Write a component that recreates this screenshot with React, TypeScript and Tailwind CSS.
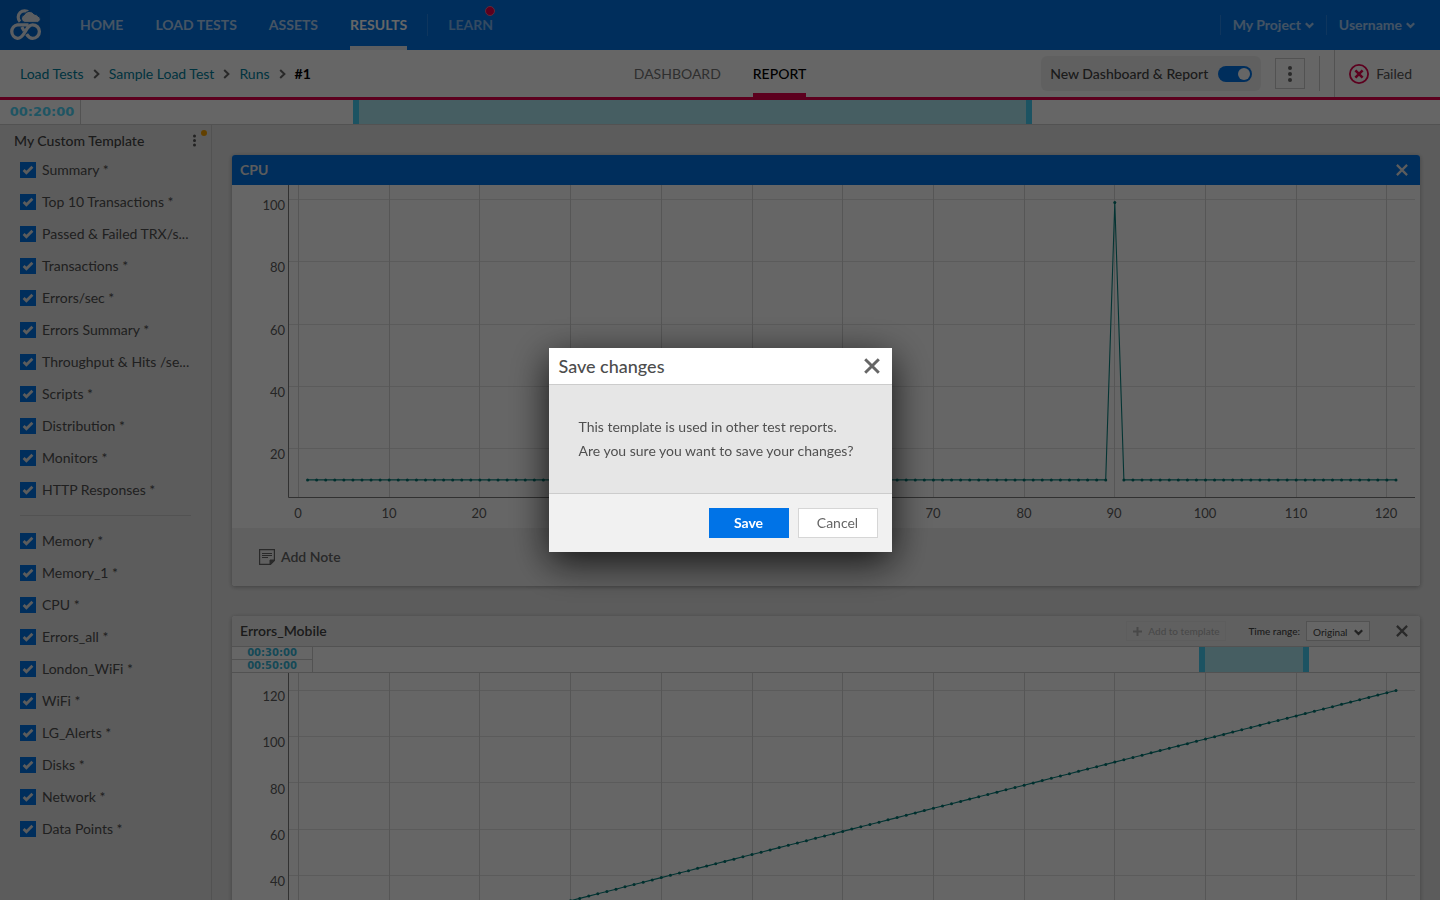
import { useId } from "react";
import type { ReactNode } from "react";

const TEMPLATE_ITEMS = [
  "Summary *",
  "Top 10 Transactions *",
  "Passed & Failed TRX/s...",
  "Transactions *",
  "Errors/sec *",
  "Errors Summary *",
  "Throughput & Hits /se...",
  "Scripts *",
  "Distribution *",
  "Monitors *",
  "HTTP Responses *",
];

const MONITOR_ITEMS = [
  "Memory *",
  "Memory_1 *",
  "CPU *",
  "Errors_all *",
  "London_WiFi *",
  "WiFi *",
  "LG_Alerts *",
  "Disks *",
  "Network *",
  "Data Points *",
];

const SAMPLES = Array.from({ length: 121 }, (_, i) => i + 1);

function LogoIcon() {
  return (
    <svg viewBox="0 0 50 50" className="size-[50px]" fill="none" aria-hidden="true">
      <path
        d="M28.5 24.8 H17.5 A6.9 6.9 0 0 0 17.5 38.4 C21.5 38.4 23.2 35 25.2 31.6 C27.2 28 29 24.8 32.6 24.8 A6.8 6.8 0 0 1 32.6 38.4 C29.6 38.4 27.9 36.4 26.6 34.2"
        stroke="#e6ebf2"
        strokeWidth="3.3"
      />
      <path d="M21.8 27 L24.2 31" stroke="#e6ebf2" strokeWidth="3.3" />
      <path d="M29 12.8 A6.2 6.2 0 1 0 20 21.6" stroke="#e6ebf2" strokeWidth="3.2" />
      <path
        d="M24.8 22.4 a3.9 3.9 0 0 1 -0.6 -7.6 a5.6 5.6 0 0 1 10 -0.7 a4 4 0 0 1 3.6 2 a3.2 3.2 0 0 1 -0.2 6.3 z"
        fill="#e6ebf2"
        stroke="#0067cf"
        strokeWidth="1"
      />
    </svg>
  );
}

function CloseIcon({ className }: { className: string }) {
  return (
    <svg viewBox="0 0 12 12" className={className} fill="none" stroke="currentColor" strokeWidth="2.2" aria-hidden="true">
      <path d="M0.9 0.9 L11.1 11.1 M11.1 0.9 L0.9 11.1" />
    </svg>
  );
}

function ChevronDown() {
  return (
    <svg viewBox="0 0 9 7" className="h-[7px] w-[9px]" fill="none" stroke="currentColor" strokeWidth="2.2" aria-hidden="true">
      <path d="M0.8 1.2 L4.5 4.9 L8.2 1.2" />
    </svg>
  );
}

function ChevronRight() {
  return (
    <svg viewBox="0 0 7 10" className="mx-[9px] h-[10px] w-[7px] text-[#666]" fill="none" stroke="currentColor" strokeWidth="2" aria-hidden="true">
      <path d="M1.2 1 L5.4 5 L1.2 9" />
    </svg>
  );
}

function Kebab({ className }: { className: string }) {
  return (
    <svg viewBox="0 0 4 16" className={className} fill="currentColor" aria-hidden="true">
      <circle cx="2" cy="2" r="2" />
      <circle cx="2" cy="8" r="2" />
      <circle cx="2" cy="14" r="2" />
    </svg>
  );
}

function NavLink({ children, active = false }: { children: ReactNode; active?: boolean }) {
  return (
    <a
      href="#"
      className={
        active
          ? "flex items-center border-b-4 border-[#e6ebf2] pt-1 text-white"
          : "flex items-center text-white/70"
      }
    >
      {children}
    </a>
  );
}

function TopBar() {
  return (
    <header className="flex h-[50px] shrink-0 bg-[#0073e7] font-bold">
      <a href="#" aria-label="Home" className="bg-[#0067cf]">
        <LogoIcon />
      </a>
      <nav className="ml-[30px] flex gap-8">
        <NavLink>HOME</NavLink>
        <NavLink>LOAD TESTS</NavLink>
        <NavLink>ASSETS</NavLink>
        <div className="flex gap-5">
          <NavLink active>RESULTS</NavLink>
          <span className="my-[14px] w-px bg-white/15" />
          <a href="#" className="relative flex items-center text-white/50">
            LEARN
            <span className="absolute top-1.5 -right-0.5 size-[10px] rounded-full border border-[#f2668f] bg-[#e5004c]" />
          </a>
        </div>
      </nav>
      <div className="ml-auto flex items-center pr-[25px] text-white/65">
        <button type="button" className="flex h-5 items-center gap-1 border-l border-white/15 px-3">
          My Project <ChevronDown />
        </button>
        <button type="button" className="flex h-5 items-center gap-1 border-l border-white/15 pl-3">
          Username <ChevronDown />
        </button>
      </div>
    </header>
  );
}

function RunBar() {
  return (
    <div className="grid h-[50px] shrink-0 grid-cols-[1fr_auto_1fr] border-b-3 border-[#e5004c] bg-white">
      <nav aria-label="Breadcrumb" className="flex items-center pl-5 text-[#00819e]">
        <a href="#">Load Tests</a>
        <ChevronRight />
        <a href="#">Sample Load Test</a>
        <ChevronRight />
        <a href="#">Runs</a>
        <ChevronRight />
        <span className="font-bold text-black">#1</span>
      </nav>
      <nav className="flex gap-8">
        <a href="#" className="flex items-center text-[#757575]">DASHBOARD</a>
        <a href="#" className="flex items-center border-b-4 border-[#e5004c] pt-1 font-medium text-black">REPORT</a>
      </nav>
      <div className="flex items-center justify-end">
        <label className="flex h-[35px] items-center gap-[10px] rounded-md bg-[#f1f1f1] px-[9px] font-medium text-[#444]">
          New Dashboard &amp; Report
          <input
            type="checkbox"
            role="switch"
            defaultChecked
            className="flex h-4 w-[34px] appearance-none items-center justify-end rounded-full bg-[#0073e7] px-0.5 before:size-3 before:rounded-full before:bg-white"
          />
        </label>
        <button
          type="button"
          aria-label="More actions"
          className="ml-[14px] flex h-[31px] w-[30px] items-center justify-center border border-[#ccc] text-[#666]"
        >
          <Kebab className="h-4 w-1" />
        </button>
        <span className="ml-[14px] h-[35px] w-px bg-[#ccc]" />
        <div className="ml-[14px] flex items-center gap-[7px] self-stretch border-l border-[#ccc] pr-7 pl-[14px] text-[#555]">
          <svg viewBox="0 0 20 20" className="size-5" fill="none" stroke="#e5004c" aria-hidden="true">
            <circle cx="10" cy="10" r="9.1" strokeWidth="1.8" />
            <path d="M6.4 6.4 L13.6 13.6 M13.6 6.4 L6.4 13.6" strokeWidth="2.6" />
          </svg>
          Failed
        </div>
      </div>
    </div>
  );
}

function RangeSelection({ before, width, after }: { before: string; width: string; after: string }) {
  return (
    <div className="flex flex-1">
      <span className={before} />
      <div className={width + " flex justify-between bg-[#aeeaf6]"}>
        <span className="w-1.5 bg-[#47d0f5]" />
        <span className="w-1.5 bg-[#47d0f5]" />
      </div>
      <span className={after} />
    </div>
  );
}

function CheckItem({ label }: { label: string }) {
  const id = useId();
  return (
    <li className="flex h-8 items-center gap-1.5 px-5">
      <span className="grid size-4 shrink-0 place-items-center">
        <input
          id={id}
          type="checkbox"
          defaultChecked
          className="col-start-1 row-start-1 size-4 appearance-none bg-[#0073e7]"
        />
        <svg viewBox="0 0 12 10" className="pointer-events-none col-start-1 row-start-1 h-[10px] w-3" fill="none" stroke="#e6e6e6" strokeWidth="2.8" aria-hidden="true">
          <path d="M1.6 5 L4.4 7.8 L10.4 1.8" />
        </svg>
      </span>
      <label htmlFor={id} className="whitespace-nowrap">{label}</label>
    </li>
  );
}

function Sidebar() {
  return (
    <aside className="w-[212px] shrink-0 border-r border-[#ccc] text-[#505050]">
      <div className="flex h-[29px] items-center justify-between pr-[15px] pl-[14px] pt-[3px]">
        <h2 className="font-medium text-[#444]">My Custom Template</h2>
        <button type="button" aria-label="Template actions" className="relative pb-0.5 text-[#555]">
          <Kebab className="h-[13px] w-[3px]" />
          <span className="absolute -top-1 left-2 size-1.5 rounded-full bg-[#f5a100]" />
        </button>
      </div>
      <ul>
        {TEMPLATE_ITEMS.map((item) => (
          <CheckItem key={item} label={item} />
        ))}
      </ul>
      <hr className="mx-5 my-[9px] border-[#ccc]" />
      <ul>
        {MONITOR_ITEMS.map((item) => (
          <CheckItem key={item} label={item} />
        ))}
      </ul>
    </aside>
  );
}

type ChartProps = {
  label: string;
  values: number[];
  ticks: number[];
  topTick: number;
  topY: number;
  unit: number;
};

/* Line chart with one sample per step on the x axis; y grows down from the highest tick. */
function LineChart({ label, values, ticks, topTick, topY, unit }: ChartProps) {
  const x = (v: number) => 66.5 + v * 9.07;
  const y = (v: number) => topY + (topTick - v) * unit;
  const points = values.map((v, i) => [x(SAMPLES[i]), y(v)]);
  const xTicks = Array.from({ length: 13 }, (_, i) => i * 10);
  return (
    <svg viewBox="0 0 1188 343" className="block h-auto w-full text-[13px]" role="img" aria-label={label}>
      {ticks.map((t) => (
        <path key={t} d={`M57 ${Math.floor(y(t)) + 0.5} H1183`} stroke="#e4e4e4" />
      ))}
      {xTicks.map((t) => (
        <path key={t} d={`M${Math.floor(x(t)) + 0.5} 0 V312`} stroke="#d6d6d6" />
      ))}
      <path d="M56.5 0 V312.5 H1183" stroke="#7a7a7a" fill="none" />
      <polyline points={points.map((p) => p.map((n) => n.toFixed(1)).join(",")).join(" ")} fill="none" stroke="#0a8380" strokeWidth="1.1" />
      {points.map(([px, py]) => (
        <circle key={px} cx={px} cy={py} r="1.5" fill="#007672" />
      ))}
      <g fill="#5c5c5c">
        {ticks.map((t) => (
          <text key={t} x="53" y={Math.round(y(t) + 10.6)} textAnchor="end">{t}</text>
        ))}
        {xTicks.map((t) => (
          <text key={t} x={Math.floor(x(t))} y="333" textAnchor="middle">{t}</text>
        ))}
      </g>
    </svg>
  );
}

function CpuCard() {
  return (
    <section className="shrink-0 overflow-hidden rounded-[3px] bg-white shadow-[0_1px_4px_rgba(0,0,0,0.3)]">
      <div className="flex h-[30px] items-center justify-between bg-[#0073e7] pr-3 pl-2 text-[#e6e6e6]">
        <h3 className="font-bold">CPU</h3>
        <button type="button" aria-label="Remove CPU">
          <CloseIcon className="size-3" />
        </button>
      </div>
      <LineChart
        label="CPU"
        values={SAMPLES.map((s) => (s === 90 ? 99 : 10))}
        ticks={[20, 40, 60, 80, 100]}
        topTick={100}
        topY={14.4}
        unit={3.117}
      />
      <div className="flex h-[58px] items-center bg-[#f1f1f1] pl-[27px]">
        <button type="button" className="flex items-center gap-1.5 font-semibold text-[#666]">
          <svg viewBox="0 0 16 16" className="size-4" fill="none" stroke="currentColor" aria-hidden="true">
            <path d="M0.6 0.6 H15.4 V11.5 L11.5 15.4 H0.6 Z" strokeWidth="1.2" />
            <path d="M15.4 11 H11 V15.4 Z" fill="currentColor" />
            <path d="M3 4.5 H13 M3 6.5 H13 M3 8.5 H9" />
          </svg>
          Add Note
        </button>
      </div>
    </section>
  );
}

function ErrorsCard() {
  return (
    <section className="shrink-0 overflow-hidden rounded-[3px] bg-white shadow-[0_1px_4px_rgba(0,0,0,0.3)]">
      <div className="flex h-[31px] items-center border-b border-[#ccc] bg-[#f1f1f1] pr-3 pl-2">
        <h3 className="font-semibold text-[#444]">Errors_Mobile</h3>
        <div className="ml-auto flex items-center text-[10px] text-[#444]">
          <button type="button" disabled className="flex h-5 w-[100px] items-center justify-center gap-1.5 border border-[#e9e9e9] font-medium text-[#b5b5b5]">
            <svg viewBox="0 0 9 9" className="size-[9px]" stroke="currentColor" strokeWidth="2" aria-hidden="true">
              <path d="M4.5 0 V9 M0 4.5 H9" />
            </svg>
            Add to template
          </button>
          <label htmlFor="time-range" className="mr-1.5 ml-[22px] font-medium">Time range:</label>
          <span className="grid h-5 w-16 items-center border border-[#ccc] bg-white">
            <select id="time-range" className="col-start-1 row-start-1 h-full w-full appearance-none bg-transparent pl-1.5">
              <option>Original</option>
            </select>
            <span className="pointer-events-none col-start-1 row-start-1 mr-1.5 justify-self-end text-[#555]">
              <ChevronDown />
            </span>
          </span>
          <button type="button" aria-label="Remove Errors_Mobile" className="ml-[26px] text-[#666]">
            <CloseIcon className="size-3" />
          </button>
        </div>
      </div>
      <div className="flex h-[26px] border-b border-[#ccc]">
        <div className="flex w-[81px] flex-col border-r border-[#ccc] text-center font-['DejaVu_Sans',sans-serif] text-[10px] leading-3 font-bold text-[#36b6d9]">
          <span className="border-b border-[#ccc]">00:30:00</span>
          <span>00:50:00</span>
        </div>
        <RangeSelection before="flex-[886]" width="flex-[110]" after="flex-[111]" />
      </div>
      <LineChart
        label="Errors_Mobile"
        values={SAMPLES.map((s) => s - 1)}
        ticks={[0, 20, 40, 60, 80, 100, 120]}
        topTick={120}
        topY={17.5}
        unit={2.31}
      />
    </section>
  );
}

function SaveDialog() {
  return (
    <div className="fixed inset-0 z-10 flex items-center justify-center bg-black/60">
      <div
        role="dialog"
        aria-modal="true"
        aria-labelledby="dialog-title"
        className="w-[343px] bg-[#f1f1f1] shadow-[0_10px_36px_rgba(0,0,0,0.8)]"
      >
        <div className="flex h-[37px] items-center justify-between border-b border-[#ccc] bg-white pr-3 pl-[10px]">
          <h2 id="dialog-title" className="text-lg font-medium text-[#4d4d4d]">Save changes</h2>
          <button type="button" aria-label="Close" className="text-[#666]">
            <CloseIcon className="size-4" />
          </button>
        </div>
        <div className="border-b border-[#ccc] bg-[#e6e6e6] px-[30px] py-[30px] leading-6 text-[#505050]">
          <p>This template is used in other test reports.</p>
          <p>Are you sure you want to save your changes?</p>
        </div>
        <div className="flex justify-end gap-[9px] p-[14px]">
          <button type="button" className="h-[30px] w-20 bg-[#0073e7] font-bold text-white">Save</button>
          <button type="button" className="h-[30px] w-20 border border-[#d6d6d6] bg-white text-[#666]">Cancel</button>
        </div>
      </div>
    </div>
  );
}

export default function App() {
  return (
    <div className="flex h-screen flex-col overflow-hidden bg-[#e6e6e6] font-['Lato',sans-serif] text-[14px] leading-5">
      <TopBar />
      <RunBar />
      <div className="flex h-[25px] shrink-0 border-b border-[#ccc] bg-white">
        <span className="flex w-[81px] items-center justify-center border-r border-[#ccc] pl-1 font-['DejaVu_Sans',sans-serif] text-[13px] font-bold text-[#4fd4f7]">
          00:20:00
        </span>
        <RangeSelection before="flex-[272]" width="flex-[679]" after="flex-[408]" />
      </div>
      <div className="flex min-h-0 flex-1">
        <Sidebar />
        <main className="flex min-w-0 flex-1 flex-col gap-[30px] overflow-hidden px-5 pt-[30px]">
          <CpuCard />
          <ErrorsCard />
        </main>
      </div>
      <SaveDialog />
    </div>
  );
}
